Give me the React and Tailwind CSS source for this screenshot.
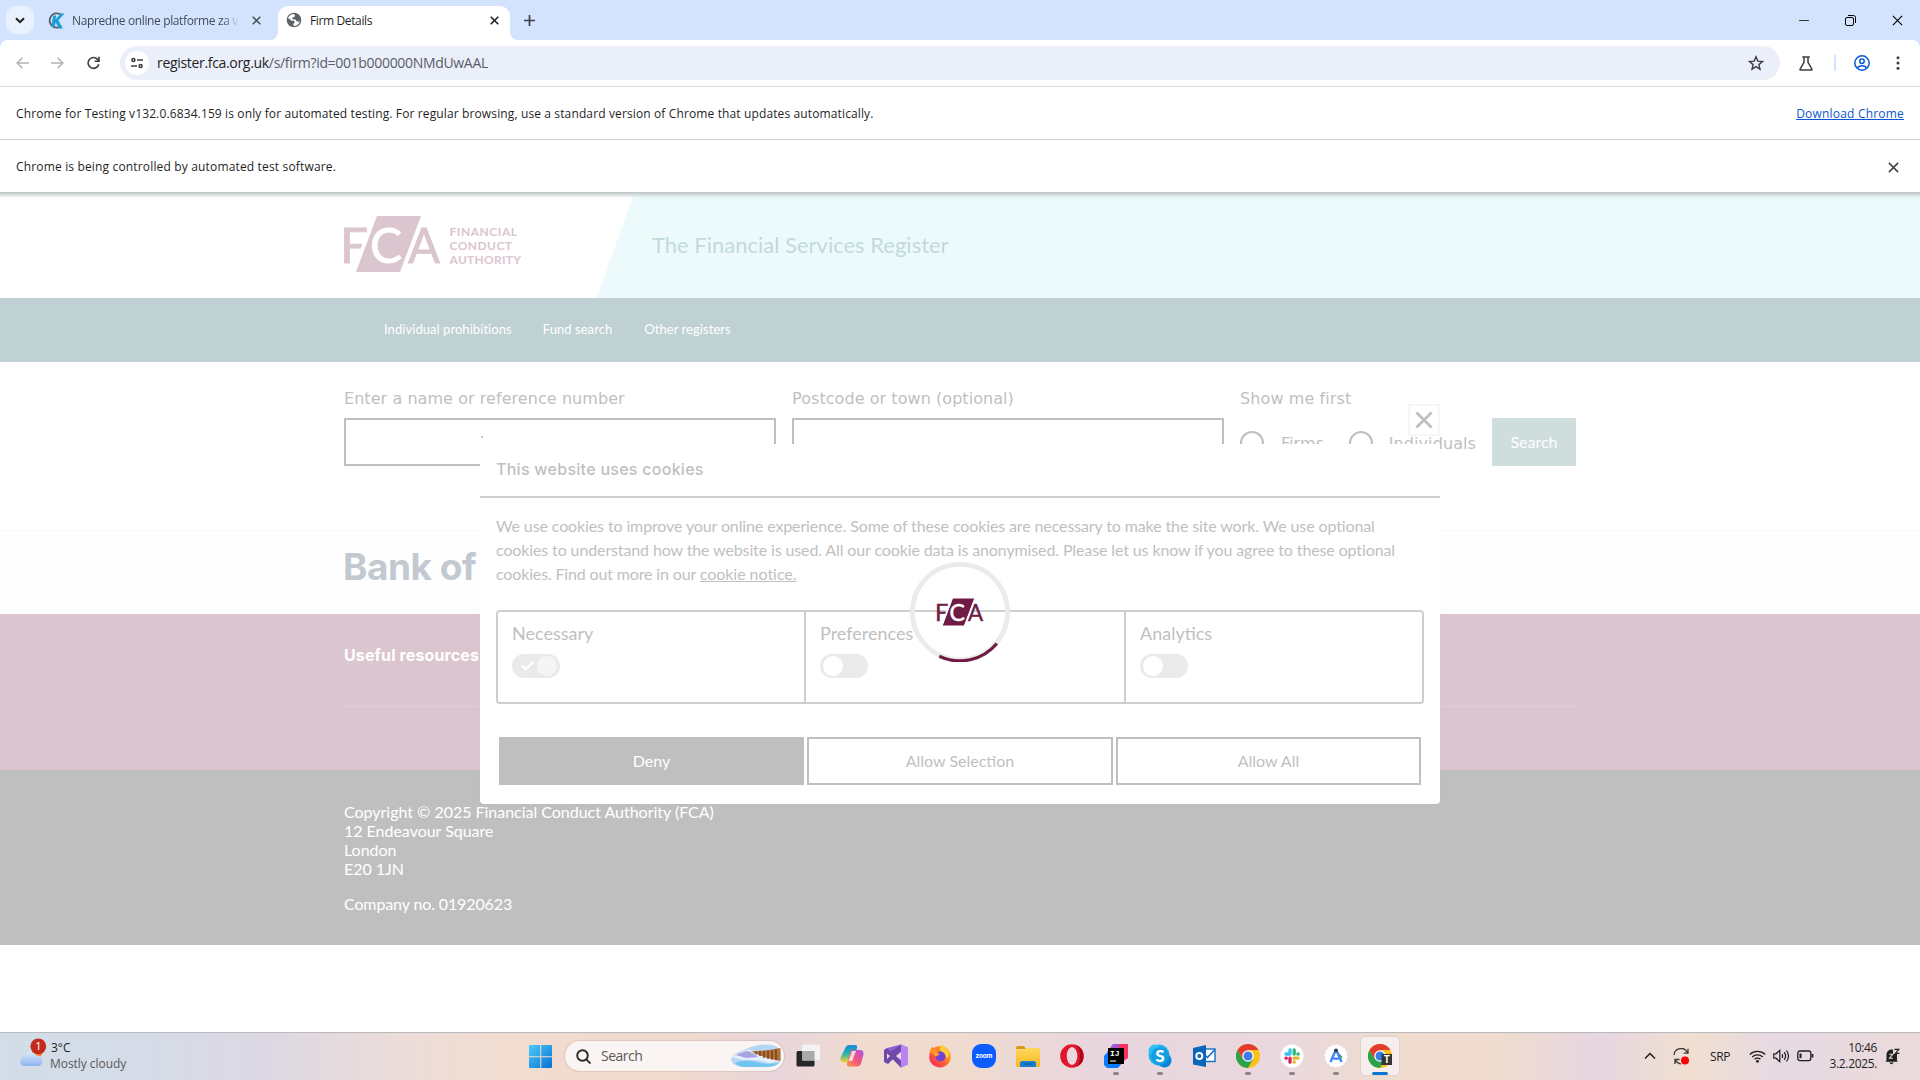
import React from "react";

const UI = "font-['Open_Sans','Noto_Sans',sans-serif]";

function X({ size = 10, w = 1.6, color = "#3c4043" }) {
  return (
    <svg width={size} height={size} viewBox="0 0 10 10" stroke={color} strokeWidth={w} fill="none" className="shrink-0">
      <path d="M.8.8 9.2 9.2M9.2.8.8 9.2" />
    </svg>
  );
}

function FcaMark({ color, bg = "#fff" }) {
  return (
    <g fontFamily="Lato, sans-serif" fontSize="49" fontWeight="400">
      <text x="-4" y="47" fill={color} stroke={color} strokeWidth=".8" textLength="28" lengthAdjust="spacingAndGlyphs">F</text>
      <text x="64" y="47" fill={color} stroke={color} strokeWidth=".8" textLength="32" lengthAdjust="spacingAndGlyphs">A</text>
      <path d="M33 0H77L56 56H12Z" fill={color} />
      <path d="M30.6 0 9.6 56M79.4 0 58.4 56" stroke={bg} strokeWidth="3.2" />
      <text x="26" y="47" fill={bg} stroke={bg} strokeWidth="1" textLength="32" lengthAdjust="spacingAndGlyphs">C</text>
    </g>
  );
}

function FcaLogo() {
  return (
    <svg width="180" height="56" viewBox="0 0 180 56" className="overflow-visible">
      <FcaMark color="#dbc5ce" />
      <g fontFamily="Lato, sans-serif" fontSize="12" fontWeight="700" fill="#dbc5ce">
        <text x="105.5" y="20.2" textLength="67.5">FINANCIAL</text>
        <text x="105.5" y="34" textLength="62.5">CONDUCT</text>
        <text x="105.5" y="47.6" textLength="71.5">AUTHORITY</text>
      </g>
    </svg>
  );
}

function TabStrip() {
  return (
    <div className={`flex h-10 bg-[#d3e3fd] pl-1.5 text-xs text-[#1f1f1f] ${UI}`}>
      <div className="mt-1.5 flex h-7 w-7 items-center justify-center rounded-[10px] bg-[#e9f0fe]">
        <svg width="10" height="7" viewBox="0 0 10 7" fill="none" stroke="#1f1f1f" strokeWidth="2"><path d="M1 1.2 5 5.2 9 1.2" /></svg>
      </div>
      <div className="ml-3.5 flex h-10 w-[222px] items-center">
        <svg width="17" height="17" viewBox="0 0 17 17" fill="none">
          <path d="M12.5 2.3A7.2 7.2 0 1 0 13.5 14" stroke="#55606b" strokeWidth="1.8" />
          <path d="M5.2 3.600H8.200L7.500 7.200 13 1.500H16.600L10.400 8.200 14.800 16.500H11L7.800 10.600 6.400 15H3.200Z" fill="#1a9fdb" />
        </svg>
        <span className="ml-[7px] w-[167px] overflow-hidden whitespace-nowrap bg-linear-to-r from-[#3c4654] from-90% to-[#d3e3fd] bg-clip-text pt-px tracking-[-0.37px] text-transparent">Napredne online platforme za v</span>
        <span className="ml-[12.5px]"><X size={9} color="#43474e" /></span>
      </div>
      <div className="flex h-10 w-2 items-end bg-white"><div className="h-10 w-2 rounded-br-lg bg-[#d3e3fd]" /></div>
      <div className="mt-1.5 flex h-[34px] w-[232px] items-center rounded-t-[10px] bg-white pb-1.5">
        <svg width="16" height="16" viewBox="0 0 16 16" className="ml-2">
          <circle cx="8" cy="8" r="7.3" fill="#5f6368" />
          <path d="M2 6.2C3 3.6 5 2.2 7.5 2l1.6 1.6-1 1.6-2 .6.3 1.5 3 .2 1.4 1.7 2.4.5.7-1.4c-.1 2.9-2 5.1-4.7 5.8l-2-.6.2-1.7 1.5-1.6-.9-1.4H5.5L4 7.2Z" fill="#fff" />
        </svg>
        <span className="ml-2 w-[172px] pt-0.5 tracking-[-0.37px]">Firm Details</span>
        <span className="ml-2"><X size={9} w={1.8} color="#1f1f1f" /></span>
      </div>
      <div className="h-10 w-2 bg-white"><div className="h-10 w-2 rounded-bl-lg bg-[#d3e3fd]" /></div>
      <div className="ml-1.5 flex h-10 items-center">
        <svg width="11" height="11" viewBox="0 0 11 11" stroke="#3c4043" strokeWidth="1.7"><path d="M5.5 0V11M0 5.5H11" /></svg>
      </div>
      <div className="ml-auto flex items-center gap-9 pr-[17px]">
        <svg width="10" height="10" viewBox="0 0 10 10" stroke="#333" strokeWidth="1"><path d="M0 5.5H10" /></svg>
        <svg width="11" height="11" viewBox="0 0 11 11" fill="none" stroke="#000"><rect x=".5" y="2.5" width="8" height="8" rx="1.5" /><path d="M3 .5H8.5a2 2 0 0 1 2 2V8" /></svg>
        <X size={11} w={1} color="#000" />
      </div>
    </div>
  );
}

function Toolbar() {
  return (
    <div className="bg-[#d3e3fd]">
      <div className={`flex h-[46px] items-center rounded-t-lg bg-white pl-4 ${UI}`}>
        <svg width="13" height="12" viewBox="0 0 13 12" fill="none" stroke="#b0b2b5" strokeWidth="1.5"><path d="M13 6H1.2M6.4.7 1.1 6l5.3 5.3" /></svg>
        <svg width="13" height="12" viewBox="0 0 13 12" fill="none" stroke="#b0b2b5" strokeWidth="1.5" className="ml-[22px]"><path d="M0 6h11.8M6.6.7 11.9 6l-5.3 5.3" /></svg>
        <svg width="13" height="14" viewBox="0 0 13 14" fill="none" stroke="#3c4043" strokeWidth="1.6" className="ml-[23px]"><path d="M11.8 8.2A5.4 5.4 0 1 1 10.6 3.4L12 4.9M12 .8V5.2H7.6" /></svg>
        <div className="ml-5 flex h-[34px] w-[1660px] items-center rounded-full bg-[#ebeffa] pl-[5px]">
          <div className="flex h-6 w-6 items-center justify-center rounded-full bg-white">
            <svg width="12" height="12" viewBox="0 0 12 12" fill="none" stroke="#3c4043" strokeWidth="1.6"><circle cx="2.4" cy="3" r="1.5" /><path d="M6 3h6M0 9h6" /><circle cx="9.6" cy="9" r="1.5" /></svg>
          </div>
          <span className="ml-2 text-sm tracking-[-0.32px] text-[#5a5e66]"><span className="text-[#1f1f1f]">register.fca.org.uk</span>/s/firm?id=001b000000NMdUwAAL</span>
          <svg width="16" height="16" viewBox="0 0 16 16" fill="none" stroke="#3c4043" strokeWidth="1.4" className="ml-auto mr-4"><path d="m8 1.8 1.8 4.3 4.7.4-3.6 3.1 1.1 4.6L8 11.7l-4 2.5 1.1-4.6L1.5 6.5l4.7-.4Z" /></svg>
        </div>
        <svg width="14" height="15" viewBox="0 0 14 15" fill="none" stroke="#3c4043" strokeWidth="1.5" className="ml-[19px]"><path d="M3.2.9h7.6M5 1v5.4L1.1 13.2a.6.6 0 0 0 .5.9h10.8a.6.6 0 0 0 .5-.9L9 6.4V1" /></svg>
        <div className="ml-[21px] h-4 w-0.5 bg-[#d3e3fd]" />
        <svg width="16" height="16" viewBox="0 0 16 16" fill="none" stroke="#0b57d0" strokeWidth="1.5" className="ml-[18px]"><circle cx="8" cy="8" r="7.2" /><circle cx="8" cy="6.2" r="2.2" /><path d="M3.2 13c1.3-1.6 2.9-2.2 4.8-2.2s3.5.6 4.8 2.2" /></svg>
        <svg width="4" height="14" viewBox="0 0 4 14" fill="#3c4043" className="ml-[26px]"><circle cx="2" cy="1.7" r="1.5" /><circle cx="2" cy="7" r="1.5" /><circle cx="2" cy="12.3" r="1.5" /></svg>
      </div>
    </div>
  );
}

function InfoBars() {
  return (
    <div className={`bg-white text-xs text-[#1f1f1f] ${UI}`}>
      <div className="flex h-[53px] items-center justify-between border-t border-[#dadcdf] px-4 pt-px">
        <span className="tracking-[0.126px]">Chrome for Testing v132.0.6834.159 is only for automated testing. For regular browsing, use a standard version of Chrome that updates automatically.</span>
        <span className="tracking-[0.2px] text-[#0b57d0] underline">Download Chrome</span>
      </div>
      <div className="flex h-[53px] items-center justify-between border-t border-[#d0d2d4] pl-4 pr-[21px] pt-0.5">
        <span className="tracking-[0.16px]">Chrome is being controlled by automated test software.</span>
        <X size={11} w={1.3} />
      </div>
    </div>
  );
}

function Field({ label }) {
  return (
    <div className="w-[432px]">
      <div className="h-8 pt-px leading-6 tracking-[0.06px]">{label}</div>
      <div className="h-12 border-2 border-[#bfbfbf]" />
    </div>
  );
}

function Page() {
  return (
    <div className="bg-white font-['Lato',sans-serif]">
      <div className="relative z-10 h-1.5 bg-linear-to-b from-[#bcc3c3] to-transparent" />
      <div className="-mt-[5px] flex h-[105px] pl-[344px]">
        <div className="w-[253px] pt-[23px]"><FcaLogo /></div>
        <div className="flex flex-1 items-center bg-[#edfafb] pb-0.5 pl-[55px] text-[22px] text-[#c1dadb] [clip-path:polygon(37px_0,100%_0,100%_100%,0_100%)]">The Financial Services Register</div>
      </div>
      <div className="flex h-16 items-center gap-8 bg-[#bfd1d3] pb-px pl-96 text-[13px] tracking-[0.06px] text-white">
        <span>Individual prohibitions</span>
        <span className="-ml-px mr-px">Fund search</span>
        <span className="-ml-px">Other registers</span>
      </div>
      <div className="flex h-[168px] gap-4 px-[344px] pt-6 font-['DejaVu_Sans',sans-serif] text-base text-[#bfbfbf]">
        <Field label="Enter a name or reference number" />
        <Field label="Postcode or town (optional)" />
        <div className="w-[236px] tracking-[0.1px]">
          <div className="h-8 pt-px leading-6">Show me first</div>
          <div className="flex h-12 items-center whitespace-nowrap pt-0.5">
            <span className="h-6 w-6 rounded-full border-2 border-[#bfbfbf]" />
            <span className="ml-[17px] w-[68px] pt-0.5">Firms</span>
            <span className="h-6 w-6 rounded-full border-2 border-[#bfbfbf]" />
            <span className="ml-4 pt-0.5">Individuals</span>
          </div>
        </div>
        <div className="mt-8 flex h-12 w-[84px] items-center justify-center bg-[#cfdddd] font-['Lato',sans-serif] text-white">Search</div>
      </div>
      <div className="flex h-[84px] items-center border-t border-[#fafafa] bg-[#fefefe] pb-[11px] pl-[343px] font-['Inter',sans-serif] text-[37px] font-bold tracking-[-0.5px] text-[#c3c9d0]">Bank of</div>
      <div className="h-[156px] bg-[#dbc6cf] px-[344px] pt-[29px]">
        <div className="h-16 border-b border-[#e0ced6] font-['Inter',sans-serif] text-base font-bold leading-6 tracking-[0.12px] text-white">Useful resources</div>
      </div>
      <div className="h-[175px] bg-[#bfbfbf] pl-[344px] pt-8 text-base leading-[19px] tracking-[-0.02px] text-white">
        <div>Copyright © 2025 Financial Conduct Authority (FCA)</div>
        <div>12 Endeavour Square</div>
        <div>London</div>
        <div>E20 1JN</div>
        <div className="mt-4 tracking-[-0.12px]">Company no. 01920623</div>
      </div>
      <div className="h-[87px]" />
    </div>
  );
}

function Toggle({ locked }) {
  return locked ? (
    <div className="mt-[9px] flex h-6 w-12 items-center justify-between rounded-full bg-[#eaeaea] pl-[9px] pr-[3px]">
      <svg width="13" height="10" viewBox="0 0 13 10" fill="none" stroke="#fff" strokeWidth="2.4"><path d="M1 4.6 4.8 8.3 12 1" /></svg>
      <span className="h-5 w-5 rounded-full bg-[#f5f5f5]" />
    </div>
  ) : (
    <div className="mt-[9px] flex h-6 w-12 items-center rounded-full bg-[#eaeaea] pl-[3px]">
      <span className="h-5 w-5 rounded-full bg-white" />
    </div>
  );
}

function CookieDialog() {
  return (
    <div className="absolute left-[480px] top-[444px] h-[360px] w-[960px] rounded-b bg-white font-['Lato',sans-serif] text-base text-[#bfbfbf] shadow-[0_0_4px_rgba(0,0,0,0.02)]">
      <div className="flex h-[54px] items-center border-b-2 border-[#cfcfcf] pb-0.5 pl-4 font-['Inter',sans-serif] font-medium tracking-[0.27px]">This website uses cookies</div>
      <div className="whitespace-nowrap px-4 pt-4 leading-6 tracking-[-0.12px]">
        <div>We use cookies to improve your online experience. Some of these cookies are necessary to make the site work. We use optional</div>
        <div>cookies to understand how the website is used. All our cookie data is anonymised. Please let us know if you agree to these optional</div>
        <div><span className="tracking-[-0.15px]">cookies. Find out more in our </span><span className="tracking-[-0.04px] underline">cookie notice.</span></div>
      </div>
      <div className="mx-4 mt-6 flex h-[94px] rounded border-2 border-[#cecece] text-lg leading-6">
        <div className="w-[308px] border-r-2 border-[#cecece] pl-3.5 pt-[9px]">Necessary<Toggle locked /></div>
        <div className="w-80 border-r-2 border-[#cecece] pl-3.5 pt-[9px]">Preferences<Toggle /></div>
        <div className="pl-3.5 pt-[9px]">Analytics<Toggle /></div>
      </div>
      <div className="mx-[19px] mt-[33px] flex h-12 gap-[3px]">
        <div className="flex w-[305px] items-center justify-center bg-[#bfbfbf] text-white">Deny</div>
        <div className="flex w-[306px] items-center justify-center border-2 border-[#bfbfbf]">Allow Selection</div>
        <div className="flex w-[305px] items-center justify-center border-2 border-[#bfbfbf]">Allow All</div>
      </div>
      <div className="absolute right-0 top-[-40px] flex h-8 w-8 items-center justify-center border-2 border-[#f6f6f6] bg-white"><X size={18} w={1.5} color="#bfbfbf" /></div>
      <span className="absolute left-[1px] top-[-8px] h-[2px] w-[2px] bg-[#c4c4c4]" />
      <svg width="100" height="100" viewBox="0 0 100 100" className="absolute left-[430px] top-[118px]">
        <circle cx="50" cy="50" r="47.6" fill="none" stroke="#ebebea" strokeWidth="4.8" />
        <path d="M29.3 94.3A48 48 0 0 0 86.8 81.5" fill="none" stroke="#701b45" strokeWidth="3.2" />
        <g transform="translate(27 36.5) scale(.482)"><FcaMark color="#701b45" /></g>
      </svg>
    </div>
  );
}

function Chrome() {
  return (
    <>
      <circle cx="12" cy="12" r="12" fill="#fbc116" />
      <path d="M1.6 6A12 12 0 0 0 12 24L17.2 15 12 12 6.8 15Z" fill="#2ba24c" />
      <path d="M1.6 6 6.8 15 12 6H22.4A12 12 0 0 0 1.6 6Z" fill="#e33b2e" />
      <circle cx="12" cy="12" r="5.8" fill="#fff" /><circle cx="12" cy="12" r="4.5" fill="#3b7ded" />
    </>
  );
}

const APPS = [
  { art: <><rect x=".5" y="7" width="18" height="15.5" rx="1.5" fill="#262626" /><rect x="6" y=".5" width="18" height="16" rx="1.5" fill="#f4f4f4" opacity=".92" /><path d="M6 7h12.5v9.5H6Z" fill="#a9a9a9" /></> },
  { art: <><path d="M6 2.5Q7 1 9 1h6c2 0 2.5 1.5 2 3L14 16c-.6 2-2 2.5-4 2.5H4c-2.5 0-4-2-3.5-5Z" fill="url(#cpA)" /><path d="M10 9q.6-3 3.5-3h6.5c2.5 0 4 2 3.5 4.5l-2.5 9c-.5 2-2 3-4 3H9c-2 0-2.5-1.5-2-3Z" fill="url(#cpB)" /><path d="m12 7-3.5 10h3.7L16 7Z" fill="#f1dbd5" /></> },
  { art: <><path d="M17 .5 24 3.5V20.5L17 23.5 2.5 8 0 9V6l3-2Z" fill="#8a60cf" /><path d="M17 .5 24 3.5V20.5L17 23.5Z" fill="#b983f2" /><path d="M17 .5V7L4 20 0 18V6l3-1.5L17 17v6.5L3.5 10" fill="#6f49a8" /><path d="m3 9.5 3 2.5-3 3Z" fill="#ead8df" /><path d="m17 8-5 4 5 4Z" fill="#ead8df" /></> },
  { art: <><circle cx="12" cy="12.7" r="10.8" fill="url(#ff)" /><path d="M12 6C12 3 14 1 15 .3c.4 3 3 4 5 6.7 1.5 2 1.5 5-1 7" fill="#ffcf3a" /><path d="M1.5 9C2 6 3 4 4.5 2.5 5 4 6 5 8 5.5L13 9l-5 1Z" fill="#ff9122" /><circle cx="12.5" cy="12.5" r="5" fill="#7542d8" /><path d="M5 9c3-1 5 0 7 1.5-2 0-2 1.5-4.5 2Z" fill="#ffa42c" /></> },
  { art: <><rect width="24" height="24" rx="9" fill="#0b5cff" /><text x="12" y="14.2" textAnchor="middle" fontFamily="Inter, sans-serif" fontSize="6.5" fontWeight="700" fill="#fff" textLength="17">zoom</text></> },
  { art: <><path d="M0 4q0-2 2-2h6l2 3H0Z" fill="#d99a12" /><path d="M0 5.5h8L11 4H23q1 0 1 1V22q0 1-1 1H1q-1 0-1-1Z" fill="url(#fold)" /><path d="M4 23v-4q0-2 2-2H18q2 0 2 2v4Z" fill="#1b80cf" /><path d="M7 20h10" stroke="#0b5a9c" strokeWidth="1.2" /></> },
  { art: <><circle cx="12" cy="12" r="11.8" fill="#e3162b" /><path d="M16 1A11.8 11.8 0 0 1 16 23q4-4 4-11T16 1Z" fill="#a90a1a" /><ellipse cx="12" cy="12" rx="5.3" ry="9" fill="#ead8df" /></> },
  { run: true, art: <><path d="M0 12 11 0H24V12L14 24H3L0 21Z" fill="#087cfa" /><path d="M9 0H24V14L18 18Z" fill="#fe315d" /><path d="M9 0h7L13 8H3Z" fill="#a557c9" /><rect x="4" y="4" width="16" height="16" fill="#000" /><text x="6" y="11.5" fontFamily="Liberation Mono, monospace" fontSize="8" fontWeight="700" fill="#fff">IJ</text><path d="M6 17h6" stroke="#fff" /></> },
  { run: true, art: <><circle cx="11" cy="11" r="10.5" fill="#1cb4ec" /><circle cx="16.5" cy="16.5" r="7" fill="#0a84d6" /><circle cx="7" cy="7" r="6.5" fill="#29c0f2" /><circle cx="12" cy="12" r="9" fill="#129ee3" /><text x="12" y="18" textAnchor="middle" fontFamily="Lato, sans-serif" fontSize="17" fontWeight="900" fill="#fff">S</text></> },
  { art: <><rect x="9" y="5" width="14" height="12.5" fill="#fff" stroke="#0e6fc4" strokeWidth="1.4" /><path d="m11 9.5 4.5 4 7-7.5" fill="none" stroke="#0e6fc4" strokeWidth="1.6" /><path d="M1 4 14 1V23L1 20.5Z" fill="#0b66bb" /><circle cx="7.3" cy="12" r="3" fill="none" stroke="#fff" strokeWidth="2" /></> },
  { run: true, art: <Chrome /> },
  { run: true, art: <><circle cx="12" cy="12" r="11.5" fill="#fff" /><g strokeWidth="3.3" strokeLinecap="round"><path d="M10 5.8v4M6 10h3.5" stroke="#36c5f0" /><path d="M14.2 6v4M18.2 10h-.3" stroke="#2eb67d" /><path d="M14.2 14.2H18M14.2 18v.2" stroke="#ecb22e" /><path d="M10 14.2v4M6 14.2h.3" stroke="#e01e5a" /></g></> },
  { run: true, art: <><circle cx="12" cy="12" r="10.4" fill="#fff" stroke="#fff" strokeWidth="2" strokeDasharray="3 1" /><path d="M12 5.5 6.5 18M12 5.5 17.5 18M7 13.5q5 2.5 10 0" fill="none" stroke="#4285f4" strokeWidth="2.4" /><path d="m15 9 3.5 4-2 2Z" fill="#34a853" /><circle cx="12" cy="6.5" r="2" fill="#333f4d" /></> },
  { active: true, art: <><Chrome /><rect x="13.5" y="10" width="10.5" height="11" fill="#333" /><text x="18.8" y="19" textAnchor="middle" fontFamily="Roboto, sans-serif" fontSize="10" fontWeight="700" fill="#fff">T</text></> },
];

function Taskbar() {
  return (
    <div className={`flex h-12 border-t border-[#b9b8bc] bg-[linear-gradient(90deg,#d2dde8_0px,#d5dce7_150px,#ddd8e3_270px,#ecdcd9_400px,#f1dccf_510px,#f0dace_680px,#e9d5db_780px,#efdbd0_860px,#f0dbcf_960px,#e8d6de_1100px,#ead8de_1280px,#efdccf_1400px,#efdccf_1500px,#e6d6e0_1600px,#f0dfd0_1690px,#e6d9e3_1780px,#ebdad9_1920px)] text-xs text-[#1f1f1f] ${UI}`}>
      <svg width="0" height="0" className="absolute">
        <defs>
          <linearGradient id="cpA" x1="0" y1="0" x2="0" y2="1"><stop stopColor="#1687dd" /><stop offset=".5" stopColor="#27b5a8" /><stop offset="1" stopColor="#ffd02f" /></linearGradient>
          <linearGradient id="cpB" x1="1" y1="0" x2="0" y2="1"><stop stopColor="#a653f0" /><stop offset=".5" stopColor="#f5517f" /><stop offset="1" stopColor="#ff9350" /></linearGradient>
          <linearGradient id="ff" x1="1" y1="0" x2="0" y2="1"><stop stopColor="#ffd43a" /><stop offset=".5" stopColor="#ff6b2b" /><stop offset="1" stopColor="#f5156c" /></linearGradient>
          <linearGradient id="fold" x1="0" y1="0" x2="0" y2="1"><stop stopColor="#ffd75e" /><stop offset="1" stopColor="#f5b81f" /></linearGradient>
          <linearGradient id="win" x1="0" y1="0" x2="1" y2="1"><stop stopColor="#4cc9fb" /><stop offset="1" stopColor="#0572d2" /></linearGradient>
          <linearGradient id="cl" x1="0" y1="0" x2="0" y2="1"><stop stopColor="#d9e8fb" /><stop offset="1" stopColor="#8db4ee" /></linearGradient>
        </defs>
      </svg>
      <div className="flex w-[529px] pl-[18px]">
        <svg width="33" height="36" viewBox="0 0 33 36">
          <circle cx="19" cy="20" r="5" fill="#f58220" />
          <path d="M6 33a5 5 0 0 1-.5-9.5 7.5 7.5 0 0 1 13-1A5.5 5.5 0 0 1 21 33Z" fill="url(#cl)" />
          <circle cx="20.3" cy="13.3" r="7.9" fill="#c42b1c" />
          <text x="20.3" y="17.3" textAnchor="middle" fontFamily="Open Sans, sans-serif" fontSize="11" fill="#fff">1</text>
        </svg>
        <div className="pt-[7px] leading-4"><div>3°C</div><div className="-ml-px tracking-[-0.05px] text-[#595959]">Mostly cloudy</div></div>
      </div>
      <svg width="24" height="24" viewBox="0 0 24 24" fill="url(#win)" className="mt-3"><path d="M0 1q0-1 1-1H11.2V11.2H0ZM12.2 0H22q1 0 1 1V11.2H12.2ZM0 12.2H11.2V23H1q-1 0-1-1ZM12.2 12.2H23V22q0 1-1 1H12.2Z" /></svg>
      <div className="ml-3 mt-2 flex h-[30px] w-[219px] items-center rounded-full bg-[#faf4f2] pl-[11px] text-sm text-[#5c5a5a] shadow-[0_0_1px_1px_rgba(120,90,90,0.15)]">
        <svg width="15" height="15" viewBox="0 0 15 15" fill="none" stroke="#2b2b2b" strokeWidth="1.9"><circle cx="6.5" cy="6.5" r="5.3" /><path d="m10.3 10.3 4.2 4.2" /></svg>
        <span className="ml-2.5 w-[130px] tracking-[-0.5px]">Search</span>
        <svg width="50" height="24" viewBox="0 0 50 24" fill="none">
          <path d="M0 15Q2 9 13 6 22 1 33 .5 46 0 49 6q2 7 0 12-3 5-16 5H15Q1 23 0 15Z" fill="#b6d6f5" />
          <path d="M1 13Q9 7 18 5.5 27 9 49 17L38 19Q26 15 12 16Z" fill="#e6effb" />
          <path d="M5 11Q13 7 17 7q5 2 10 6l-12 1Z" fill="#a9a2e0" />
          <path d="M4 19q10-4 21-1t23 1q-3 4-15 4H15Q7 23 4 19Z" fill="#6fc7ef" />
          <path d="M20 7.5Q35 7 49.500 4v13Q35 15 20 7.500Z" fill="#b5713a" />
          <path d="M25 7.5v3M29 7v5M33 7v7M37 6.5v8.5M41 6v9.5M45 5.3v11" stroke="#6b3d1c" strokeWidth="1.3" />
        </svg>
      </div>
      <div className="ml-0.5 flex">
        {APPS.map((a, i) => (
          <div key={i} className="flex w-11 justify-center pt-1">
            <div className={a.active ? "flex h-[38px] w-[38px] flex-col items-center rounded bg-[#f6eeec] pt-[7px] shadow-[0_0_1px_1px_rgba(120,90,90,0.08)]" : "flex h-[38px] w-[38px] flex-col items-center pt-[7px]"}>
              <svg width="24" height="24" viewBox="0 0 24 24">{a.art}</svg>
              {a.active && <span className="mt-1 h-[3px] w-4 rounded-full bg-[#0b76d2]" />}
              {a.run && <span className="mt-1 h-[3px] w-1.5 rounded-full bg-[#8b8385]" />}
            </div>
          </div>
        ))}
      </div>
      <div className="ml-auto flex h-[46px] items-center pr-5">
        <svg width="12" height="8" viewBox="0 0 12 8" fill="none" stroke="#1f1f1f" strokeWidth="1.5"><path d="M1 6.5 6 1.5l5 5" /></svg>
        <svg width="17" height="17" viewBox="0 0 17 17" fill="none" stroke="#3a3a3a" strokeWidth="1.3" className="ml-[17px]"><path d="M1 7A7 7 0 0 1 14.5 5M15 .8V5.2H10.6M2 16V11.5H6.5M2.3 12q2 3.500 5.500 4" /><circle cx="12" cy="12.5" r="4" fill="#f00" stroke="none" /></svg>
        <span className="ml-5 w-[39px] pt-0.5 tracking-[-0.4px]">SRP</span>
        <svg width="17" height="13" viewBox="0 0 17 13" fill="none" stroke="#1f1f1f" strokeWidth="1.3"><path d="M.8 4.5a11 11 0 0 1 15.4 0M3.2 7a7.5 7.5 0 0 1 10.6 0M5.6 9.3a4 4 0 0 1 5.8 0" /><circle cx="8.5" cy="11.3" r="1.4" fill="#1f1f1f" stroke="none" /></svg>
        <svg width="17" height="14" viewBox="0 0 17 14" fill="none" stroke="#1f1f1f" strokeWidth="1.2" className="ml-[7px]"><path d="M.8 4.8H3L6.8 1.3V12.7L3 9.2H.8ZM9 5q1.3 2 0 4M11.2 3.2q2.8 3.8 0 7.6M13.5 1.5q4 5.5 0 11" /></svg>
        <svg width="17" height="12" viewBox="0 0 17 12" fill="none" stroke="#1f1f1f" strokeWidth="1.3" className="ml-[7px]"><rect x=".8" y="1" width="13" height="9.6" rx="2" /><path d="M3.5 3.5v4.6" strokeWidth="2" /><path d="M15.5 4v3.5" strokeWidth="1.8" /></svg>
        <div className="w-[63px] text-right leading-4 tracking-[-0.35px]"><div>10:46</div><div>3.2.2025.</div></div>
        <svg width="15" height="17" viewBox="0 0 15 17" fill="#1f1f1f" className="ml-2"><path d="M1.5 12.5V6.5A5 5 0 0 1 6.5 1.6H8V8.5h3.8v4l1.2 1.2H.3ZM4.5 14.6h4q-.5 1.7-2 1.7t-2-1.7Z" /><path d="M6 6h6v6H6Z" /><path d="M9.5 1.3h4.3L10.5 5.3H14.3" fill="none" stroke="#1f1f1f" strokeWidth="1.2" /><path d="M4.3 6.3h3.4L4.5 10.2h3.4" fill="none" stroke="#ebdad9" strokeWidth="1.1" /></svg>
      </div>
    </div>
  );
}

export default function App() {
  return (
    <div className="relative h-[1080px] w-[1920px] overflow-hidden bg-white">
      <TabStrip />
      <Toolbar />
      <InfoBars />
      <Page />
      <CookieDialog />
      <Taskbar />
    </div>
  );
}
